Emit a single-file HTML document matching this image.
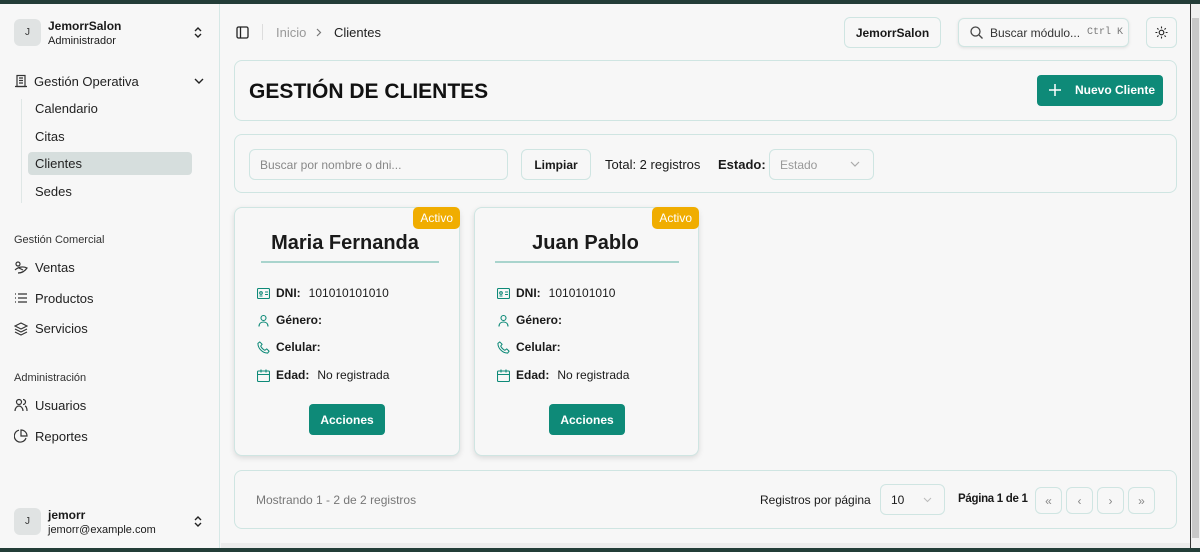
<!DOCTYPE html>
<html><head><meta charset="utf-8"><style>
*{box-sizing:border-box;margin:0;padding:0}
body{width:1200px;height:552px;overflow:hidden;background:#233d38;font-family:"Liberation Sans",sans-serif;color:#1a1a1a;font-size:13px;position:relative}
.app{position:absolute;left:0;top:4px;width:1190px;height:544px;background:#f7f7f7}
.sb{position:absolute;left:0;top:0;width:220px;height:544px;border-right:1px solid #d6e8e6;background:#f7f7f7}
.av{position:absolute;width:27px;height:27px;border-radius:6px;background:#e0e3e3;font-size:10px;display:flex;align-items:center;justify-content:center;color:#333}
.abs{position:absolute}
.nav{position:absolute;left:35px;font-size:13px;color:#222}
.sec{position:absolute;left:14px;font-size:11px;color:#333}
.ic{position:absolute;left:14px}
.card{position:absolute;border:1px solid #cfe5e2;border-radius:8px;background:#f7f7f7}
.btn{position:absolute;border:1px solid #cfe5e2;border-radius:6px;background:#f7f7f7;display:flex;align-items:center;justify-content:center}
.cc{position:absolute;top:203px;width:226px;height:249px;border:1px solid #cfe5e2;border-radius:8px;background:#f7f7f7;box-shadow:0 2px 6px rgba(0,0,0,.12)}
.badge{position:absolute;right:-1px;top:-1px;background:#f0ad00;color:#fff;font-size:12px;padding:4px 7px;border-radius:5px}
.nm{position:absolute;top:24px;left:0;width:100%;text-align:center;font-weight:bold;font-size:20px}
.ln{position:absolute;top:53px;left:36px;width:184px;height:2px;background:#a9d4cd}
.row{position:absolute;left:22px;font-size:12px;display:flex;align-items:center;gap:6px}
.row b{margin-right:2px}
.acc{position:absolute;top:196px;left:74px;width:76px;height:31px;background:#0e8a78;color:#fff;border-radius:4px;font-weight:bold;font-size:12px;display:flex;align-items:center;justify-content:center}
.pg{width:27px;height:27px;color:#888;font-size:12px;top:483px}
</style></head><body>
<div class="app">
<div class="sb">
 <div class="av" style="left:14px;top:15px">J</div>
 <div class="abs" style="left:48px;top:15px;font-weight:bold;font-size:12px">JemorrSalon</div>
 <div class="abs" style="left:48px;top:31px;font-size:11px">Administrador</div>
 <svg class="abs" style="left:193px;top:22px" width="10" height="13" viewBox="0 0 10 13" fill="none" stroke="#222" stroke-width="1.4"><path d="M2 5l3-3 3 3M2 8l3 3 3-3"/></svg>
 <svg class="ic" style="top:70px" width="14" height="14" viewBox="0 0 14 14" fill="none" stroke="#333" stroke-width="1.2"><rect x="3" y="1.5" width="8" height="11"/><path d="M1 12.5h12M5 4h4M5 6.5h4M5 9h4"/></svg>
 <div class="nav" style="left:34px;top:70px">Gestión Operativa</div>
 <svg class="abs" style="left:194px;top:73px" width="10" height="8" fill="none" stroke="#222" stroke-width="1.4"><path d="M1 2l4 4 4-4"/></svg>
 <div class="abs" style="left:21px;top:95px;width:1px;height:104px;background:#dfe7e6"></div>
 <div class="nav" style="top:97px">Calendario</div>
 <div class="nav" style="top:125px">Citas</div>
 <div class="abs" style="left:28px;top:148px;width:164px;height:23px;background:#d6dedd;border-radius:4px"></div>
 <div class="nav" style="top:152px">Clientes</div>
 <div class="nav" style="top:180px">Sedes</div>
 <div class="sec" style="top:230px">Gestión Comercial</div>
 <svg class="ic" style="top:257px" width="14" height="14" viewBox="0 0 14 14" fill="none" stroke="#333" stroke-width="1.2"><circle cx="4" cy="3" r="2"/><path d="M1 9c3-3 8-4 12-2-2 3-5 5-9 5M5 7l4 2"/></svg>
 <div class="nav" style="top:256px">Ventas</div>
 <svg class="ic" style="top:288px" width="14" height="12" fill="none" stroke="#333" stroke-width="1.2"><path d="M4 2h9M4 6h9M4 10h9M1 2h1M1 6h1M1 10h1"/></svg>
 <div class="nav" style="top:287px">Productos</div>
 <svg class="ic" style="top:318px" width="14" height="14" viewBox="0 0 14 14" fill="none" stroke="#333" stroke-width="1.2"><path d="M7 1l6 3-6 3-6-3zM1 7l6 3 6-3M1 10l6 3 6-3"/></svg>
 <div class="nav" style="top:317px">Servicios</div>
 <div class="sec" style="top:368px">Administración</div>
 <svg class="ic" style="top:394px" width="14" height="14" viewBox="0 0 14 14" fill="none" stroke="#333" stroke-width="1.2"><circle cx="5" cy="4" r="2.5"/><path d="M1 13c0-3 2-5 4-5s4 2 4 5M9 1.5a2.5 2.5 0 010 5M11 8c1.5.5 2 3 2 5"/></svg>
 <div class="nav" style="top:394px">Usuarios</div>
 <svg class="ic" style="top:425px" width="14" height="14" viewBox="0 0 14 14" fill="none" stroke="#333" stroke-width="1.2"><path d="M12 9A6 6 0 115 1.2"/><path d="M7 1a6 6 0 016 6H7z"/></svg>
 <div class="nav" style="top:425px">Reportes</div>
 <div class="av" style="left:14px;top:504px">J</div>
 <div class="abs" style="left:48px;top:504px;font-weight:bold;font-size:12px">jemorr</div>
 <div class="abs" style="left:48px;top:520px;font-size:11px">jemorr@example.com</div>
 <svg class="abs" style="left:193px;top:511px" width="10" height="13" viewBox="0 0 10 13" fill="none" stroke="#222" stroke-width="1.4"><path d="M2 5l3-3 3 3M2 8l3 3 3-3"/></svg>
</div>
<svg class="abs" style="left:236px;top:22px" width="13" height="13" fill="none" stroke="#222" stroke-width="1.3"><rect x="1" y="1" width="11" height="11" rx="1.5"/><path d="M4.5 1v11"/></svg>
<div class="abs" style="left:262px;top:20px;width:1px;height:16px;background:#ddd"></div>
<div class="abs" style="left:276px;top:21px;color:#999">Inicio</div>
<svg class="abs" style="left:316px;top:24px" width="6" height="9" fill="none" stroke="#777" stroke-width="1.2"><path d="M1 1l3.5 3.5L1 8"/></svg>
<div class="abs" style="left:334px;top:21px;color:#222">Clientes</div>
<div class="btn" style="left:844px;top:13px;width:97px;height:31px;font-weight:bold;font-size:12px">JemorrSalon</div>
<div class="btn" style="left:958px;top:14px;width:171px;height:29px;justify-content:flex-start;padding-left:11px;box-shadow:0 1px 3px rgba(0,0,0,.1)">
 <svg width="13" height="13" fill="none" stroke="#444" stroke-width="1.3"><circle cx="5.5" cy="5.5" r="4.5"/><path d="M9 9l3.5 3.5"/></svg>
 <span style="margin-left:7px;color:#333;font-size:12px">Buscar módulo...</span>
 <span style="margin-left:7px;font-family:'Liberation Mono',monospace;font-size:10px;color:#777">Ctrl K</span></div>
<div class="btn" style="left:1146px;top:13px;width:31px;height:31px">
 <svg width="13" height="13" viewBox="0 0 14 14" fill="none" stroke="#222" stroke-width="1.2"><circle cx="7" cy="7" r="2.5"/><path d="M7 0.5v2M7 11.5v2M0.5 7h2M11.5 7h2M2.4 2.4l1.4 1.4M10.2 10.2l1.4 1.4M2.4 11.6l1.4-1.4M10.2 3.8l1.4-1.4"/></svg></div>
<div class="card" style="left:234px;top:56px;width:943px;height:61px">
 <div class="abs" style="left:14px;top:19px;font-weight:bold;font-size:21px;color:#111">GESTIÓN DE CLIENTES</div>
 <div class="abs" style="left:802px;top:14px;width:126px;height:31px;background:#0e8a78;border-radius:4px;color:#fff;font-weight:bold;font-size:12px;white-space:nowrap">
  <svg class="abs" style="left:12px;top:9px" width="12" height="12" fill="none" stroke="#fff" stroke-width="1.5"><path d="M6 0v12M0 6h12"/></svg>
  <span class="abs" style="left:38px;top:8px">Nuevo Cliente</span></div>
</div>
<div class="card" style="left:234px;top:130px;width:943px;height:59px">
 <div class="abs" style="left:14px;top:14px;width:259px;height:31px;border:1px solid #cfe5e2;border-radius:6px;padding:8px 10px;color:#888;font-size:12px">Buscar por nombre o dni...</div>
 <div class="btn" style="left:286px;top:14px;width:70px;height:31px;font-weight:bold;font-size:12px">Limpiar</div>
 <div class="abs" style="left:370px;top:22px">Total: 2 registros</div>
 <div class="abs" style="left:483px;top:22px;font-weight:bold">Estado:</div>
 <div class="abs" style="left:534px;top:14px;width:105px;height:31px;border:1px solid #cfe5e2;border-radius:6px;padding:8px 10px;color:#999;font-size:12px">Estado<svg class="abs" style="left:80px;top:11px" width="10" height="7" fill="none" stroke="#aaa" stroke-width="1.2"><path d="M1 1l4 4 4-4"/></svg></div>
</div>
<div class="cc" style="left:234px">
 <div class="badge">Activo</div><div class="nm" style="left:-2px">Maria Fernanda</div><div class="ln" style="left:26px;width:178px"></div>
 <div class="row" style="top:78px"><svg width="13" height="11" fill="none" stroke="#0e8a78" stroke-width="1.1"><rect x=".5" y=".5" width="12" height="10" rx="1"/><circle cx="4" cy="5" r="1.3"/><path d="M2.5 8h3M8 4h3M8 6.5h3"/></svg><b>DNI:</b>101010101010</div>
 <div class="row" style="top:105px"><svg width="13" height="13" fill="none" stroke="#0e8a78" stroke-width="1.1"><circle cx="6.5" cy="4" r="2.5"/><path d="M2 12.5c0-3 2-4.5 4.5-4.5s4.5 1.5 4.5 4.5"/></svg><b>Género:</b></div>
 <div class="row" style="top:132px"><svg width="13" height="13" viewBox="0 0 14 14" fill="none" stroke="#0e8a78" stroke-width="1.1"><path d="M3 1l2.5 2.5-1.5 2c1 2 2.5 3.5 4.5 4.5l2-1.5L13 11l-1.5 2C6 13 1 8 1 2.5z"/></svg><b>Celular:</b></div>
 <div class="row" style="top:160px"><svg width="13" height="13" fill="none" stroke="#0e8a78" stroke-width="1.1"><rect x=".5" y="2" width="12" height="10.5" rx="1"/><path d="M.5 5.5h12M4 .5v3M9 .5v3"/></svg><b>Edad:</b>No registrada</div>
 <div class="acc">Acciones</div>
</div>
<div class="cc" style="left:474px;width:225px">
 <div class="badge">Activo</div><div class="nm" style="left:-1px">Juan Pablo</div><div class="ln" style="left:20px;width:184px"></div>
 <div class="row" style="top:78px"><svg width="13" height="11" fill="none" stroke="#0e8a78" stroke-width="1.1"><rect x=".5" y=".5" width="12" height="10" rx="1"/><circle cx="4" cy="5" r="1.3"/><path d="M2.5 8h3M8 4h3M8 6.5h3"/></svg><b>DNI:</b>1010101010</div>
 <div class="row" style="top:105px"><svg width="13" height="13" fill="none" stroke="#0e8a78" stroke-width="1.1"><circle cx="6.5" cy="4" r="2.5"/><path d="M2 12.5c0-3 2-4.5 4.5-4.5s4.5 1.5 4.5 4.5"/></svg><b>Género:</b></div>
 <div class="row" style="top:132px"><svg width="13" height="13" viewBox="0 0 14 14" fill="none" stroke="#0e8a78" stroke-width="1.1"><path d="M3 1l2.5 2.5-1.5 2c1 2 2.5 3.5 4.5 4.5l2-1.5L13 11l-1.5 2C6 13 1 8 1 2.5z"/></svg><b>Celular:</b></div>
 <div class="row" style="top:160px"><svg width="13" height="13" fill="none" stroke="#0e8a78" stroke-width="1.1"><rect x=".5" y="2" width="12" height="10.5" rx="1"/><path d="M.5 5.5h12M4 .5v3M9 .5v3"/></svg><b>Edad:</b>No registrada</div>
 <div class="acc">Acciones</div>
</div>
<div class="card" style="left:234px;top:466px;width:943px;height:59px">
 <div class="abs" style="left:21px;top:22px;color:#777;font-size:12px">Mostrando 1 - 2 de 2 registros</div>
 <div class="abs" style="left:525px;top:22px;font-size:12px">Registros por página</div>
 <div class="abs" style="left:645px;top:13px;width:65px;height:31px;border:1px solid #cfe5e2;border-radius:6px;padding:8px 10px;font-size:12px">10<svg class="abs" style="left:42px;top:12px" width="9" height="6" fill="none" stroke="#bbb" stroke-width="1"><path d="M1 1l3.5 3.5L8 1"/></svg></div>
 <div class="abs" style="left:723px;top:22px;font-weight:bold;font-size:11.5px;letter-spacing:-0.3px">Página 1 de 1</div>
</div>
<div class="btn pg" style="left:1035px;top:483px">«</div>
<div class="btn pg" style="left:1066px;top:483px">‹</div>
<div class="btn pg" style="left:1097px;top:483px">›</div>
<div class="btn pg" style="left:1128px;top:483px">»</div>
<div class="abs" style="left:221px;top:539px;width:969px;height:5px;background:#ececec"></div>
</div>
<div class="abs" style="left:1190px;top:4px;width:10px;height:544px;background:#f0f0f0;border-left:1px solid #333"></div>
<div class="abs" style="left:1192px;top:18px;width:7px;height:520px;background:#c8c8c8"></div>
</body></html>
